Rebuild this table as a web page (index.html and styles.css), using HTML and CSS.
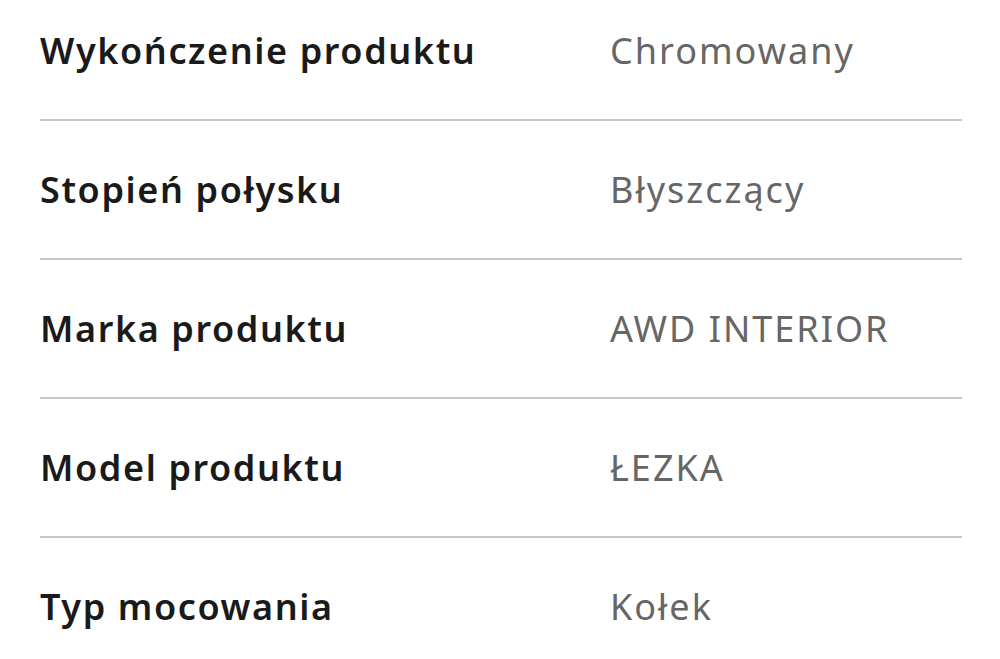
FILE: index.html
```html
<!DOCTYPE html>
<html lang="pl">
<head>
<meta charset="utf-8">
<link rel="stylesheet" href="styles.css">
</head>
<body>
<div class="specs">
  <div class="row"><div class="label">Wykończenie produktu</div><div class="value">Chromowany</div></div>
  <div class="row"><div class="label">Stopień połysku</div><div class="value">Błyszczący</div></div>
  <div class="row"><div class="label">Marka produktu</div><div class="value">AWD INTERIOR</div></div>
  <div class="row"><div class="label">Model produktu</div><div class="value">ŁEZKA</div></div>
  <div class="row"><div class="label">Typ mocowania</div><div class="value">Kołek</div></div>
</div>
</body>
</html>
```
FILE: styles.css
```css
html, body { margin: 0; padding: 0; background: #fff; }
body { font-family: "Noto Sans", sans-serif; overflow: hidden; }
.specs { margin: -18px 38px 0 40px; }
.row {
  display: flex;
  align-items: center;
  height: 137px;
  border-bottom: 2px solid #c6c6c6;
}
.row:last-child { border-bottom: none; }
.label {
  width: 570px;
  font-size: 36px;
  font-weight: 600;
  color: #1a1a1a;
  letter-spacing: 1.6px;
}
.value {
  font-size: 36px;
  color: #666;
  letter-spacing: 2px;
}
```
